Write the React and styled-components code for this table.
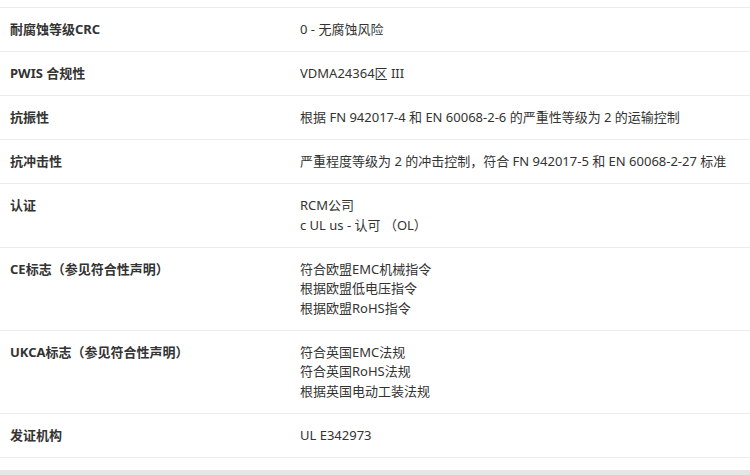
import React from 'react';
import styled, { createGlobalStyle } from 'styled-components';

const GlobalStyle = createGlobalStyle`
  html, body {
    margin: 0;
    padding: 0;
    background: #fff;
  }
  body {
    font-family: "Noto Sans", "Noto Sans CJK SC", sans-serif;
    color: #333;
  }
`

const specs = [
  { label: '耐腐蚀等级CRC', values: ['0 - 无腐蚀风险'] },
  { label: 'PWIS 合规性', values: ['VDMA24364区 III'] },
  { label: '抗振性', values: ['根据 FN 942017-4 和 EN 60068-2-6 的严重性等级为 2 的运输控制'] },
  { label: '抗冲击性', values: ['严重程度等级为 2 的冲击控制，符合 FN 942017-5 和 EN 60068-2-27 标准'] },
  { label: '认证', values: ['RCM公司', 'c UL us - 认可 （OL）'] },
  { label: 'CE标志（参见符合性声明）', values: ['符合欧盟EMC机械指令', '根据欧盟低电压指令', '根据欧盟RoHS指令'] },
  { label: 'UKCA标志（参见符合性声明）', values: ['符合英国EMC法规', '符合英国RoHS法规', '根据英国电动工装法规'] },
  { label: '发证机构', values: ['UL E342973'] },
]

function App() {
  return (
    <>
      <GlobalStyle />
      <Wrapper>
        <Table>
          {specs.map((s) => (
            <Row key={s.label}>
              <Label>{s.label}</Label>
              <Value>
                {s.values.map((v) => (
                  <Line key={v}>{v}</Line>
                ))}
              </Value>
            </Row>
          ))}
        </Table>
        <Footer />
      </Wrapper>
    </>
  )
}

const Wrapper = styled.div`
  padding-top: 7px;
  width: 750px;
`

const Table = styled.div`
  border-top: 1px solid #ececec;
`

const Row = styled.div`
  display: grid;
  grid-template-columns: 300px 1fr;
  border-bottom: 1px solid #ececec;
  padding: 12px 0 11.5px;
`

const Label = styled.div`
  padding-left: 10px;
  font-size: 13px;
  line-height: 19.5px;
  font-weight: 700;
  color: #333;
`

const Value = styled.div`
  font-size: 13px;
  line-height: 19.5px;
  color: #333;
`

const Line = styled.div`
  white-space: nowrap;
`

const Footer = styled.div`
  margin-top: 12px;
  height: 6px;
  background: #e6e6e6;
`

export default App;
